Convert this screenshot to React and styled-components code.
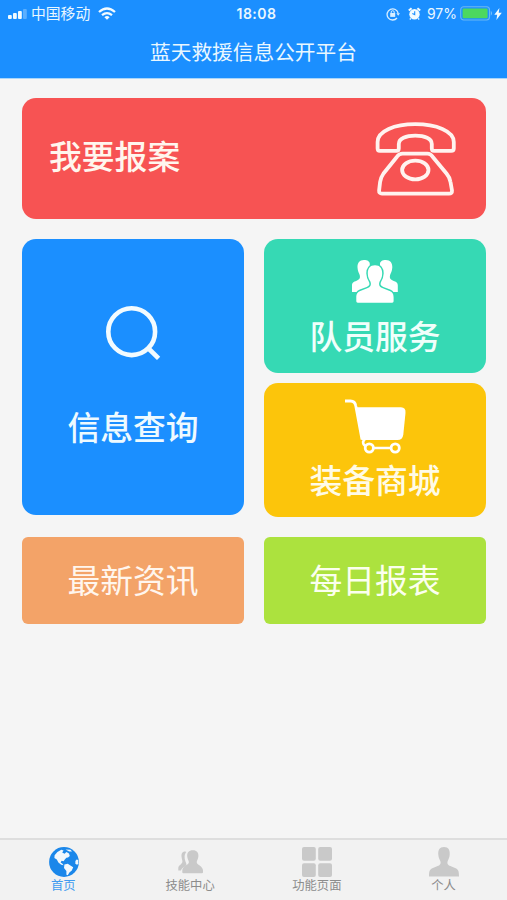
import styled, { createGlobalStyle } from "styled-components";

const GlobalStyle = createGlobalStyle`
  * {
    box-sizing: border-box;
  }
  body {
    margin: 0;
    background-color: #f5f5f5;
    font-family: "Liberation Sans", "Noto Sans CJK SC", sans-serif;
  }
  svg {
    display: block;
    flex-shrink: 0;
  }
`;

const Page = styled.div`
  display: flex;
  flex-direction: column;
  height: 900px;
  width: 507px;
  background-color: #f5f5f5;
  overflow: hidden;
`;

const Header = styled.header`
  height: 79px;
  background-color: #1b8fff;
  border-bottom: 1px solid #a9d6fb;
  color: #e9f7ff;
`;

const StatusBar = styled.div`
  display: grid;
  grid-template-columns: 1fr auto 1fr;
  align-items: center;
  height: 27px;
  padding: 0 5px 0 8px;
`;

const StatusGroup = styled.div`
  display: flex;
  align-items: center;
  justify-content: ${(props) => (props.$end ? "flex-end" : "flex-start")};
`;

const Carrier = styled.span`
  font-family: "Noto Sans CJK SC", sans-serif;
  font-size: 14.8px;
  line-height: 20px;
  margin: -1px 8px 0 4px;
`;

const Clock = styled.span`
  font-family: Inter, sans-serif;
  font-size: 14px;
  font-weight: 600;
  letter-spacing: 0.5px;
  margin-right: -3px;
`;

const Percent = styled.span`
  font-family: Inter, sans-serif;
  font-size: 14px;
  margin: 0 3px 0 6px;
`;

const StatusGap = styled.span`
  width: 8px;
`;

const Title = styled.h1`
  margin: 9px 0 0;
  font-family: "Noto Sans CJK SC", sans-serif;
  font-size: 20.7px;
  font-weight: 400;
  line-height: 30px;
  text-align: center;
`;

const Content = styled.main`
  flex: 1;
  display: flex;
  flex-direction: column;
  gap: 20px;
  padding: 19px 21px 0 22px;
`;

const Columns = styled.div`
  display: grid;
  grid-template-columns: 222px 222px;
  gap: 20px;
`;

const Stack = styled.div`
  display: flex;
  flex-direction: column;
  gap: 10px;
`;

const Card = styled.div`
  display: flex;
  flex-direction: column;
  align-items: center;
  background-color: ${(props) => props.$color};
  height: ${(props) => props.$height}px;
  padding-top: ${(props) => props.$top}px;
  border-radius: 14px;
`;

const ReportCard = styled(Card)`
  flex-direction: row;
  align-items: flex-start;
  justify-content: space-between;
  padding: 24px 30px 0 27px;
`;

const LinkCard = styled(Card)`
  justify-content: center;
  padding-bottom: 3px;
  border-radius: 6px;
`;

const Label = styled.span`
  font-family: "Noto Sans CJK SC", sans-serif;
  font-size: 32.8px;
  font-weight: ${(props) => props.$weight || 500};
  line-height: 40px;
  color: ${(props) => props.$tint || "#fff6ee"};
  margin-top: ${(props) => props.$gap || 0}px;
`;

const TabBar = styled.nav`
  display: grid;
  grid-template-columns: repeat(4, 1fr);
  height: 62px;
  background-color: #f2f2f2;
  border-top: 2px solid #dedede;
`;

const Tab = styled.a`
  display: flex;
  flex-direction: column;
  align-items: center;
  padding-top: 7px;
  font-family: "Noto Sans CJK SC", sans-serif;
  font-size: 12.3px;
  line-height: 16px;
  color: ${(props) => (props.$active ? "#3f9bf0" : "#8c8c8c")};
`;

const TabIcon = styled.span`
  display: flex;
  align-items: center;
  justify-content: center;
  height: 30px;
  padding-left: 1px;
  color: ${(props) => (props.$active ? "#1b87ea" : "#c9c9c9")};
`;

const SignalIcon = () => (
  <svg width="19" height="12" viewBox="0 0 19 12" fill="#f2fbff">
    <rect x="0" y="7" width="3.8" height="4" rx="1" />
    <rect x="5" y="5" width="3.8" height="6" rx="1" />
    <rect x="10" y="3" width="3.8" height="8" rx="1" />
    <rect x="15" y="1" width="3.8" height="10" rx="1" opacity="0.3" />
  </svg>
);

const WifiIcon = () => (
  <svg width="18" height="13" viewBox="0 0 18 13" fill="none" stroke="#f2fbff" strokeWidth="2.3">
    <path d="M1 5Q9 -2 17 5" />
    <path d="M4 8.2Q9 4 14 8.2" />
    <path d="M6.4 10.2Q9 8 11.6 10.2L9 12.8Z" fill="#f2fbff" stroke="none" />
  </svg>
);

const LockIcon = () => (
  <svg width="14" height="14" viewBox="0 0 14 14" fill="none" stroke="#d8eeff" strokeWidth="1.3">
    <path d="M11 11A5.6 5.6 0 1 1 12.2 6.4" />
    <path d="M10.4 6.2H14L12.2 8.8Z" fill="#d8eeff" stroke="none" />
    <rect x="4.2" y="6" width="5" height="3.9" fill="#d8eeff" stroke="none" />
    <path d="M5.2 6.2V5Q5.2 3.7 6.7 3.7T8.2 5V6.2" strokeWidth="1" />
  </svg>
);

const AlarmIcon = () => (
  <svg width="13" height="14" viewBox="0 0 13 14">
    <circle cx="6.5" cy="7.2" r="5.2" fill="#f2fbff" />
    <path d="M0.8 3.6L3.6 1.2M12.2 3.6L9.4 1.2" stroke="#f2fbff" strokeWidth="2" />
    <path d="M2.8 11.3L1.8 12.5M10.2 11.3L11.2 12.5" stroke="#f2fbff" strokeWidth="1.3" />
    <path d="M6.7 4.2V7.6L4.3 6.6" fill="none" stroke="#1b8fff" strokeWidth="1.1" />
  </svg>
);

const BatteryIcon = () => (
  <svg width="34" height="15" viewBox="0 0 34 15">
    <rect x="0.7" y="0.7" width="28.8" height="13.3" rx="3" fill="none" stroke="#6bb8f4" strokeWidth="1.1" />
    <rect x="2.6" y="2.5" width="25" height="9.7" rx="1" fill="#4cd85f" />
    <path d="M30.8 4.8Q33 7.3 30.8 9.8Z" fill="#8ac8f8" />
  </svg>
);

const BoltIcon = () => (
  <svg width="8" height="12" viewBox="0 0 8 12" fill="#f2fbff">
    <path d="M5.4 0L0.3 6.8H3.2L2.4 12L7.8 4.8H4.7Z" />
  </svg>
);

const PhoneIcon = () => (
  <svg width="81" height="75" viewBox="0 0 81 75" fill="none" stroke="#fff3ef" strokeWidth="3.8" strokeLinejoin="round">
    <path d="M4.5 28.8H21.5Q23.8 28.8 23.8 26.5V22C23.8 16.5 31 13.7 40.3 13.7S56.8 16.5 56.8 22V26.5Q56.8 28.8 59 28.8H76.2Q78.8 28.8 78.8 26.5V20C78.8 9 61 2.2 40.3 2.2S2.6 9 2.6 20V26.5Q2.6 28.8 4.8 28.8Z" />
    <path d="M27.5 31.7H52.5Q55.5 31.7 57.6 34.7L71.5 51.5Q74.9 55.5 75.5 60L77 68.5Q77.2 71.6 74 71.6H7Q3.9 71.6 4.1 68.5L5.1 60Q5.7 55.5 8.5 51.5L22 34.7Q24.3 31.7 27.5 31.7Z" />
    <ellipse cx="40.3" cy="48" rx="13.2" ry="9.4" />
  </svg>
);

const SearchIcon = () => (
  <svg width="58" height="56" viewBox="0 0 58 56" fill="none" stroke="#f2fbff" strokeWidth="4.6">
    <circle cx="27.7" cy="27.7" r="23.4" />
    <path d="M44 44L54.6 54.4" />
  </svg>
);

// the middle figure is outlined in the card colour so it stands clear of the two behind
const TeamIcon = () => {
  const side =
    "M12 0C7.4 0 5.3 3 5.5 7.5C5.7 11.3 7 13 7.7 15C8.5 18.3 7.2 19.7 4.6 20.7C1.5 21.9 0 22.5 0 25.5V32H14L20 24V9C17.5 8 17.8 5.5 17.8 4C17.8 1.5 15.5 0 12 0Z";
  return (
    <svg width="46" height="43" viewBox="0 0 46 43" fill="#ffffff">
      <path d={side} />
      <path d={side} transform="translate(45.8 0) scale(-1 1)" />
      <path
        d="M23 5.3C18 5.3 15.7 8.8 15.8 13.5C15.9 17.5 17.2 19.5 18.4 21.5C19.7 24.8 18.5 27 15.2 28.3L8.3 31C5.2 32.2 4.3 34 4.3 37.5V41.3Q4.3 42.7 5.7 42.7H40.2Q41.6 42.7 41.6 41.3V37.5C41.6 34 40.7 32.2 37.6 31L30.8 28.3C27.5 27 26.3 24.8 27.6 21.5C28.8 19.5 30.1 17.5 30.2 13.5C30.3 8.8 28 5.3 23 5.3Z"
        stroke="#36d9b4"
        strokeWidth="3"
        paintOrder="stroke"
      />
    </svg>
  );
};

const CartIcon = () => (
  <svg width="61" height="55" viewBox="0 0 61 55" fill="none" stroke="#ffffff" strokeWidth="2.8">
    <path d="M0 2H5.5Q10 2 10.8 7L17 40.5" />
    <path d="M11 8.3H56Q61 8.5 60.5 14L58.3 35.5Q57.6 41 52.5 41H16.5Z" fill="#ffffff" stroke="none" />
    <path d="M19.8 40.6C17.4 42.5 17.6 45.5 20.2 47M28.5 49H46" strokeWidth="2.6" />
    <circle cx="24.3" cy="49" r="4.1" />
    <circle cx="50.2" cy="49" r="4.1" />
  </svg>
);

const GlobeIcon = () => (
  <svg width="30" height="30" viewBox="0 0 30 30">
    <circle cx="15" cy="15" r="14.9" fill="currentColor" />
    <g fill="#f2f8fd">
      <path d="M5.6 8.2L8.4 5L12.3 2.8L14.6 3.4L13.2 5.4L15.6 6.8L17.4 5L20 6.4L20.8 9L19 10.6L17.4 10.8L15.8 12.4L14.6 14.2L12.6 13.8L11.6 15.4L13.2 16.4L14.6 18.2L12.2 17.8L9.4 15.6L7.8 12.4L5.4 11Z" />
      <path d="M15.4 17.6L18.8 16.8L21.4 18.6L24.2 20.2L22.8 23.4L20.4 25.4L18.8 28.2L17.4 27.8L17.4 24L15 21Z" />
      <path d="M16.6 2.4L21.4 2.8L23 4.4L20.2 4.6Z" />
      <path d="M27.6 12.4L29.2 13L29.3 16.6L28 18L26.4 16.2L26.4 14Z" />
    </g>
  </svg>
);

const SkillIcon = () => (
  <svg width="26" height="24" viewBox="0 0 26 24" fill="currentColor">
    <path d="M7.2 1.5C3.9 1.5 3.2 4 3.6 7C3.9 9.5 4.6 10.5 4.4 12C3.9 14.5 0.3 15 0.3 18.5V20.5H3C3.8 17.5 6.8 17 8.2 15.2C9.3 13.7 6.5 11.5 6.6 6.5C6.7 4.5 7.4 3 8.4 2Z" />
    <path d="M14.8 0.3C10.7 0.3 9 2.8 9.2 6.2C9.4 9 10.6 10.2 10.9 12C11.2 14.8 4.3 16 4.3 20.5V22.3Q4.3 23.3 5.3 23.3H24Q25 23.3 25 22.3V20.5C25 16 18.4 14.8 18.7 12C19 10.2 20.2 9 20.4 6.2C20.6 2.8 18.9 0.3 14.8 0.3Z" />
  </svg>
);

const GridIcon = () => (
  <svg width="30" height="30" viewBox="0 0 30 30" fill="currentColor">
    <rect x="0" y="0" width="13.8" height="13.8" rx="2" />
    <rect x="16.2" y="0" width="13.8" height="13.8" rx="2" />
    <rect x="0" y="16.2" width="13.8" height="13.8" rx="2" />
    <rect x="16.2" y="16.2" width="13.8" height="13.8" rx="2" />
  </svg>
);

const PersonIcon = () => (
  <svg width="30" height="30" viewBox="0 0 30 30" fill="currentColor">
    <path d="M15 0C10.5 0 9 3 9.3 7.5C9.5 11 10.5 12 11.3 14C12.4 17.3 10.5 18.5 7.5 19.5L3.3 21.2C0.5 22.5 0 24.5 0 29.5H30C30 24.5 29.5 22.5 26.7 21.2L22.5 19.5C19.5 18.5 17.6 17.3 18.7 14C19.5 12 20.5 11 20.7 7.5C21 3 19.5 0 15 0Z" />
  </svg>
);

const tabs = [
  { name: "首页", icon: <GlobeIcon />, active: true },
  { name: "技能中心", icon: <SkillIcon /> },
  { name: "功能页面", icon: <GridIcon /> },
  { name: "个人", icon: <PersonIcon /> },
];

const App = () => {
  return (
    <Page>
      <GlobalStyle />
      <Header>
        <StatusBar>
          <StatusGroup>
            <SignalIcon />
            <Carrier>中国移动</Carrier>
            <WifiIcon />
          </StatusGroup>
          <Clock>18:08</Clock>
          <StatusGroup $end>
            <LockIcon />
            <StatusGap />
            <AlarmIcon />
            <Percent>97%</Percent>
            <BatteryIcon />
            <BoltIcon />
          </StatusGroup>
        </StatusBar>
        <Title>蓝天救援信息公开平台</Title>
      </Header>
      <Content>
        <ReportCard $color="#f75353" $height={121}>
          <Label $gap={13}>我要报案</Label>
          <PhoneIcon />
        </ReportCard>
        <Columns>
          <Card $color="#1b8fff" $height={276} $top={65}>
            <SearchIcon />
            <Label $gap={46} $tint="#eefaff">
              信息查询
            </Label>
          </Card>
          <Stack>
            <Card $color="#36d9b4" $height={134} $top={21}>
              <TeamIcon />
              <Label $gap={12} $tint="#f0fffb">
                队员服务
              </Label>
            </Card>
            <Card $color="#fcc50b" $height={134} $top={16}>
              <CartIcon />
              <Label $gap={5} $tint="#fffbe6">
                装备商城
              </Label>
            </Card>
          </Stack>
        </Columns>
        <Columns>
          <LinkCard $color="#f3a368" $height={87}>
            <Label $weight={400}>最新资讯</Label>
          </LinkCard>
          <LinkCard $color="#ace23e" $height={87}>
            <Label $weight={400} $tint="#fbffee">
              每日报表
            </Label>
          </LinkCard>
        </Columns>
      </Content>
      <TabBar>
        {tabs.map((tab) => (
          <Tab key={tab.name} $active={tab.active}>
            <TabIcon $active={tab.active}>{tab.icon}</TabIcon>
            {tab.name}
          </Tab>
        ))}
      </TabBar>
    </Page>
  );
};

export default App;
